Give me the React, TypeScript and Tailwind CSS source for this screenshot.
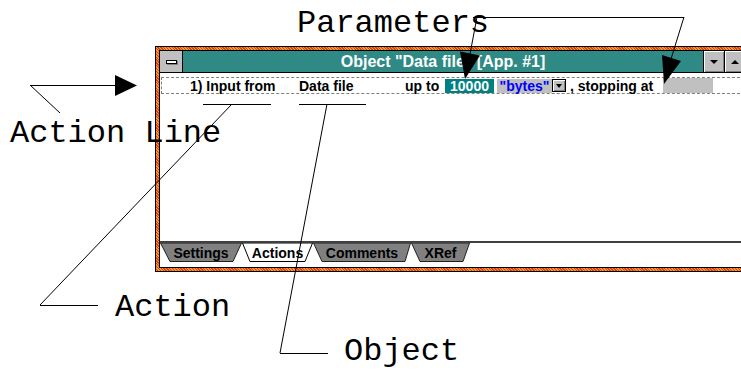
import React from "react";

const ui = "font-['Liberation_Sans',Arial,sans-serif] font-bold";
const mono = "font-['Liberation_Mono','Courier_New',monospace] text-[32px] leading-[32px] text-black";

function Tab({ w, label, active, l = 9, r = 8 }: { w: number; label: string; active?: boolean; l?: number; r?: number }) {
  return (
    <div className="relative h-[19px] flex items-center justify-center" style={{ width: w }}>
      <svg className="absolute inset-0" width={w} height={19}>
        <polygon
          points={`0.5,0 ${w - 0.5},0 ${w - r},18.5 ${l},18.5`}
          fill={active ? "#ffffff" : "#808080"}
          stroke={active ? "#000000" : "#202020"}
          strokeWidth={1}
        />
      </svg>
      <span className={`relative ${ui} text-[14px] leading-none text-black`}>{label}</span>
    </div>
  );
}

function ArrowBtn({ up }: { up?: boolean }) {
  return (
    <div className="w-[21px] h-full border-l border-black bg-[#c0c0c0] flex items-center justify-center shadow-[inset_1px_1px_0_#ffffff,inset_-1px_-1px_0_#808080]">
      <div
        className={
          up
            ? "w-0 h-0 border-l-[4px] border-r-[4px] border-b-[4px] border-l-transparent border-r-transparent border-b-black"
            : "w-0 h-0 border-l-[4px] border-r-[4px] border-t-[4px] border-l-transparent border-r-transparent border-t-black"
        }
      />
    </div>
  );
}

export default function App() {
  return (
    <div className="relative w-[741px] h-[370px] overflow-hidden bg-white">
      <div className="pt-[46px] pl-[155px]">
        {/* window */}
        <div className="w-[595px] h-[226px] border border-black p-[3px] bg-[repeating-linear-gradient(45deg,#f39a2a_0px,#f39a2a_1px,#d8401c_1px,#d8401c_2px)]">
          <div className="h-full border border-black bg-white flex flex-col">
            {/* title bar */}
            <div className="h-[22px] border-b border-black flex">
              <div className="w-[23px] border-r border-black bg-[#c0c0c0] flex items-center justify-center">
                <div className="w-[11px] h-[4px] border border-black bg-white shadow-[1px_1px_0_#808080]" />
              </div>
              <div className="flex-1 bg-[#2f8a85] flex items-center justify-center">
                <span className={`${ui} text-[16px] leading-none text-white`}>Object "Data file" [App. #1]</span>
              </div>
              <ArrowBtn />
              <ArrowBtn up />
            </div>
            {/* client */}
            <div className="flex-1 flex flex-col pt-[4px]">
              <div className="ml-[1px] h-[17px] border border-dashed border-[#808080] flex items-center pl-[28px] text-[14px] leading-none text-black">
                <span className={`${ui} w-[109px]`}>1) Input from</span>
                <span className={`${ui} w-[106px]`}>Data file</span>
                <span className={`${ui} w-[40px]`}>up to</span>
                <div className={`${ui} w-[49px] h-[14px] bg-[#008080] text-white flex items-center justify-center`}>10000</div>
                <div className={`${ui} ml-[3px] w-[55px] h-[14px] bg-[#c0c0c0] text-[#0000ff] flex items-center justify-center`}>"bytes"</div>
                <div className="w-[14px] h-[13px] border border-black bg-[#c0c0c0] flex items-center justify-center shadow-[inset_1px_1px_0_#ffffff,inset_-1px_-1px_0_#808080]">
                  <div className="w-0 h-0 border-l-[3px] border-r-[3px] border-t-[4px] border-l-transparent border-r-transparent border-t-black" />
                </div>
                <span className={`${ui} ml-[4px] w-[93px]`}>, stopping at</span>
                <div className="w-[50px] h-[15px] bg-[#c0c0c0]" />
              </div>
              <div className="mt-auto mb-[5px] h-[21px] border-t-2 border-[#404040] flex">
                <Tab w={82} label="Settings" l={10} r={9} />
                <Tab w={71} label="Actions" active l={8} r={8} />
                <Tab w={98} label="Comments" l={9} r={6} />
                <Tab w={59} label="XRef" l={9} r={7} />
              </div>
            </div>
          </div>
        </div>
      </div>

      {/* annotation drawing */}
      <svg className="absolute inset-0 pointer-events-none" width={741} height={370}>
        <g stroke="#000" strokeWidth={1} fill="none">
          {/* Action Line */}
          <line x1={30} y1={85.5} x2={117} y2={85.5} />
          <line x1={30} y1={85} x2={60} y2={113} />
          {/* Parameters */}
          <line x1={473} y1={17.5} x2={684} y2={17.5} />
          <line x1={477} y1={17} x2={470} y2={54} />
          <line x1={684} y1={17} x2={671} y2={59} />
          {/* Action */}
          <line x1={203} y1={104.5} x2={271} y2={104.5} />
          <line x1={232} y1={104} x2={40} y2={305} />
          <line x1={40} y1={305.5} x2={98} y2={305.5} />
          {/* Object */}
          <line x1={299} y1={104.5} x2={366} y2={104.5} />
          <line x1={327} y1={104} x2={280} y2={353} />
          <line x1={280} y1={353.5} x2={328} y2={353.5} />
        </g>
        <g fill="#000">
          <polygon points="115,75 115,96 137,85.5" />
          <polygon points="480,55.4 460,51.6 465,79" />
          <polygon points="681,61 662,55 664,84" />
        </g>
      </svg>

      <span className={`absolute left-[297px] top-[8px] ${mono}`}>Parameters</span>
      <span className={`absolute left-[10px] top-[118px] ${mono}`}>Action Line</span>
      <span className={`absolute left-[115px] top-[292px] ${mono}`}>Action</span>
      <span className={`absolute left-[344px] top-[336px] ${mono}`}>Object</span>
    </div>
  );
}
